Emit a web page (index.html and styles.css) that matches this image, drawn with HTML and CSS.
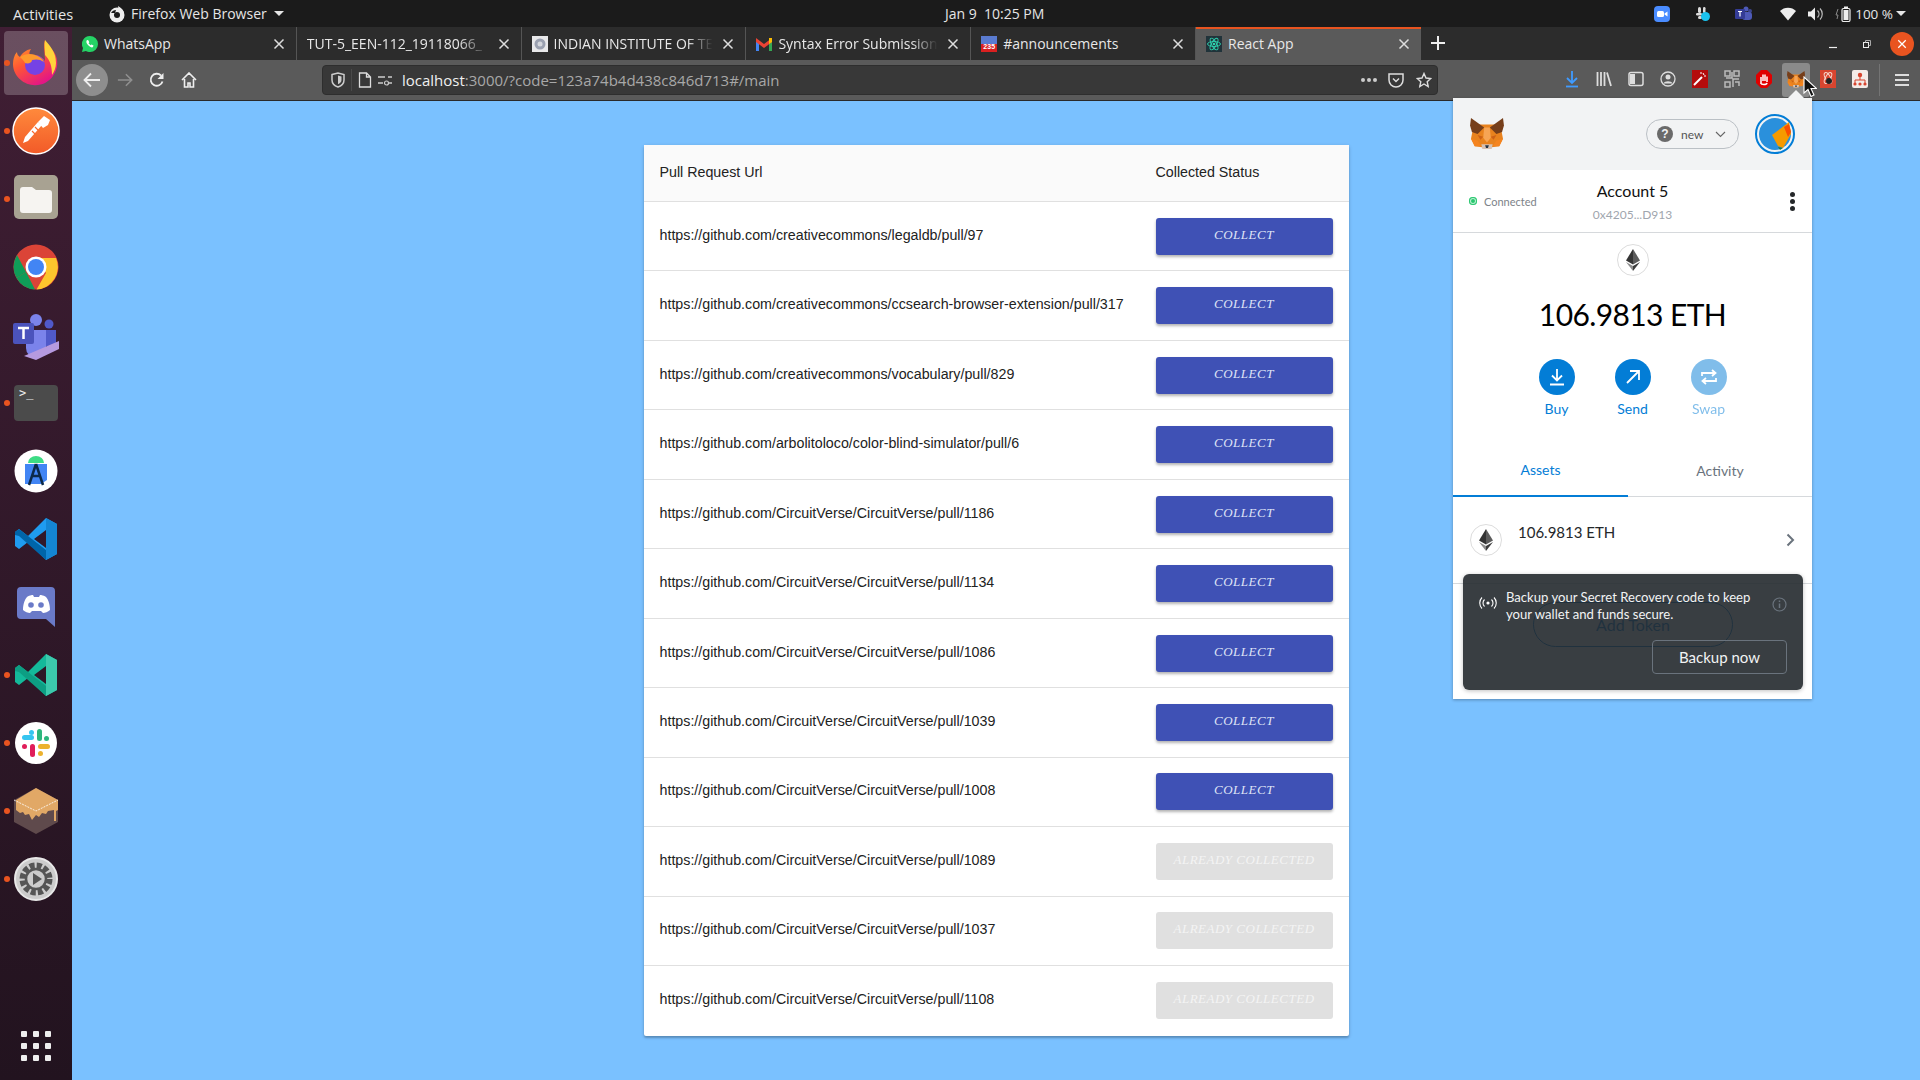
FILE: index.html
```html
<!DOCTYPE html>
<html lang="en">
<head>
    <meta charset="UTF-8">
    <title>React App</title>
    <link rel="stylesheet" href="styles.css">
</head>
<body>
    <svg class="defs" width="0" height="0">
        <symbol id="fox" viewBox="0 0 36 34">
            <polygon fill="#e8821e" points="3,12 8,7 28,7 33,12 35,22 31,30 23,31 20,33 16,33 13,31 5,30 1,22"/>
            <polygon fill="#763e1a" points="1,0 15,10 8,17 2,15 0,8"/>
            <polygon fill="#763e1a" points="35,0 21,10 28,17 34,15 36,8"/>
            <polygon fill="#f6a455" points="15,10 21,10 22,21 18,26 14,21"/>
            <polygon fill="#d7c1b3" points="12,28 24,28 23,33 13,33"/>
            <polygon fill="#233447" points="16,29 20,29 19,32 17,32"/>
            <polygon fill="#cd6116" points="8,18 14,20 11,23"/>
            <polygon fill="#cd6116" points="28,18 22,20 25,23"/>
            <polygon fill="#f5841f" points="1,22 8,24 12,30 5,30"/>
            <polygon fill="#f5841f" points="35,22 28,24 24,30 31,30"/>
        </symbol>
        <symbol id="eth" viewBox="0 0 32 32">
            <circle cx="16" cy="16" r="15.5" fill="#fff" stroke="#dcdcdc"/>
            <polygon fill="#343434" points="16,5 9,16.4 16,20.4"/>
            <polygon fill="#5c5c5c" points="16,5 23,16.4 16,20.4"/>
            <polygon fill="#8c8c8c" points="16,22 9,18 16,27"/>
            <polygon fill="#3c3c3c" points="16,22 23,18 16,27"/>
        </symbol>
        <symbol id="close" viewBox="0 0 12 12">
            <path d="M1.5 1.5l9 9M10.5 1.5l-9 9" stroke="currentColor" stroke-width="1.5" fill="none"/>
        </symbol>
    </svg>

    <div class="topbar">
        <span class="activities">Activities</span>
        <span class="app-menu">
            <svg width="18" height="18" viewBox="0 0 18 18"><circle cx="9" cy="10" r="7.5" fill="#eee"/><circle cx="9" cy="10" r="3" fill="#1b1b1b"/><path d="M10 1c3 2 6 4 6 8l-5-2z" fill="#eee"/><path d="M3 8c1-2 3-3 5-3l-1 3z" fill="#1b1b1b"/></svg>
            Firefox Web Browser
            <i class="caret"></i>
        </span>
        <span class="clock">Jan 9&nbsp;&nbsp;10:25 PM</span>
        <div class="tray">
            <svg class="tray-zoom" width="16" height="16" viewBox="0 0 16 16"><rect width="16" height="16" rx="4" fill="#4a8cff"/><rect x="3" y="5" width="7" height="6" rx="1.5" fill="#fff"/><path d="M10.5 7.5l3-2v5l-3-2z" fill="#fff"/></svg>
            <svg class="tray-slack" width="16" height="16" viewBox="0 0 16 16"><g fill="#ddd"><rect x="3" y="1" width="3" height="6" rx="1.5"/><rect x="1" y="7" width="6" height="2.5" rx="1.2"/><rect x="8" y="1" width="2.5" height="6" rx="1.2"/><rect x="3" y="10" width="4" height="3" rx="1.5"/></g><circle cx="10.5" cy="10.5" r="4.5" fill="#19c2ee"/></svg>
            <svg class="tray-teams" width="18" height="16" viewBox="0 0 18 16"><circle cx="11" cy="3" r="2.5" fill="#4e5ab8"/><circle cx="15" cy="5" r="2" fill="#3d4690"/><rect x="7" y="6" width="10" height="8" rx="3" fill="#4e5ab8"/><rect y="3" width="10" height="10" rx="1" fill="#343c96"/><path d="M3 5.500h4M5 5.500v5" stroke="#fff" stroke-width="1.200"/></svg>
            <svg class="tray-wifi" width="16" height="14" viewBox="0 0 16 14"><path d="M0 4c4-4.500 12-4.500 16 0l-8 9.500z" fill="#eee"/></svg>
            <svg class="tray-vol" width="16" height="14" viewBox="0 0 16 14"><path d="M0 4.500h3l4-4v13l-4-4H0z" fill="#eee"/><path d="M9.500 3.500c2 2 2 5 0 7M12 1.500c3 3 3 8 0 11" stroke="#bbb" stroke-width="1.200" fill="none"/></svg>
            <svg class="tray-batt" width="18" height="16" viewBox="0 0 18 16"><path d="M3 3l-2 6h2l-1 4" stroke="#888" fill="none"/><rect x="7" y="2.500" width="8" height="13" rx="1.500" fill="none" stroke="#eee" stroke-width="1.200"/><rect x="9" y="0.500" width="4" height="2" fill="#eee"/><rect x="8.500" y="4" width="5" height="10" fill="#eee"/></svg>
            <span class="battery">100 %</span>
            <i class="caret"></i>
        </div>
    </div>

    <div class="desktop">
        <nav class="dock">
            <div class="dock-item active running">
                <svg width="48" height="48" viewBox="0 0 48 48"><defs><linearGradient id="ffx" x1="0" y1="0" x2="0.600" y2="1"><stop offset="0" stop-color="#ffb32c"/><stop offset="0.500" stop-color="#ff5634"/><stop offset="1" stop-color="#e31587"/></linearGradient></defs><path d="M33 1c1 5 5 6 9 12 5 8 4 17-1 24-5 7-13 10-20 9C10 45 1 36 1 25c0-4 1-9 4-12 0 2 1 4 3 5 2-4 6-7 11-8-2 3-2 5-1 6 5-1 12 1 15 6 0-7-2-15 0-21z" fill="url(#ffx)"/><path d="M33 1c5 6 11 12 11 23 0 5-2 9-4 12 0-9-2-15-7-20 0-6-1-10 0-15z" fill="#ffd43b"/><circle cx="23" cy="26" r="10" fill="#7542e5"/><path d="M8 18c4-3 10-4 15-2 4 1 7 3 9 7-4-3-8-3-12-2 0 3-4 4-7 3-1-2-3-4-5-6z" fill="#ff9a2e"/></svg>
            </div>
            <div class="dock-item running">
                <svg width="48" height="48" viewBox="0 0 48 48"><defs><linearGradient id="pm" x1="0" y1="0" x2="0" y2="1"><stop offset="0" stop-color="#ff8a3c"/><stop offset="1" stop-color="#f25a28"/></linearGradient></defs><circle cx="24" cy="24" r="23" fill="url(#pm)" stroke="#fff" stroke-width="1.500"/><path d="M11 36l5-2 14-16-4-3-13 15z" fill="#fff"/><path d="M26 15l6-6 6 4-2 5-5 3z" fill="#fff"/><path d="M20 24l5 5M23 20l5 5" stroke="#f66a30" stroke-width="1.200"/></svg>
            </div>
            <div class="dock-item running nudge-up">
                <svg width="44" height="44" viewBox="0 0 44 44"><rect width="44" height="44" rx="5" fill="#a8a292"/><path d="M6 15a3 3 0 0 1 3-3h9l4 3h13a3 3 0 0 1 3 3v17a3 3 0 0 1-3 3H9a3 3 0 0 1-3-3z" fill="#f6f4f1"/></svg>
            </div>
            <div class="dock-item">
                <svg width="46" height="46" viewBox="0 0 46 46"><circle cx="23" cy="23" r="22.500" fill="#db4437"/><path d="M23 14h20a22.500 22.500 0 0 1-19.500 31.500L33 29z" fill="#fdc52d"/><path d="M4 11l9 17-9.500 6A22.500 22.500 0 0 1 4 11z" fill="#0f9d58"/><path d="M13 28l9 17.500A22.500 22.500 0 0 1 3.500 34z" fill="#0f9d58"/><circle cx="23" cy="23" r="10.500" fill="#fff"/><circle cx="23" cy="23" r="8" fill="#4285f4"/></svg>
            </div>
            <div class="dock-item nudge-down">
                <svg width="48" height="46" viewBox="0 0 48 46"><circle cx="24" cy="6" r="6" fill="#7b83eb"/><circle cx="37" cy="10" r="4.500" fill="#5059c9"/><path d="M30 16h14v14a10 10 0 0 1-14 0z" fill="#5059c9"/><path d="M14 16h20v18a10 10 0 0 1-20 0z" fill="#7b83eb"/><rect x="1" y="9" width="21" height="21" rx="2" fill="#4b53bc"/><path d="M6 14h11M11.500 14v11" stroke="#fff" stroke-width="2.500"/><polygon points="12,42 47,27 47,35 24,46" fill="#b69ae0"/></svg>
            </div>
            <div class="dock-item running">
                <div class="term">&gt;_</div>
            </div>
            <div class="dock-item">
                <svg width="44" height="44" viewBox="0 0 44 44"><circle cx="22" cy="22" r="21.500" fill="#fff"/><path d="M14 14a8 7 0 0 1 16 0z" fill="#3ddc84"/><path d="M11 15h22v16l-6 4H11z" fill="#4285f4"/><path d="M22 15l-7 21M22 15l7 21M17 27h10" stroke="#0c2a4a" stroke-width="2.500" fill="none"/></svg>
            </div>
            <div class="dock-item">
                <svg width="44" height="44" viewBox="0 0 44 44"><path d="M32 1l11 6v30l-11 6-18-18-9 7-4-3V15l4-3 9 7zM32 13L20 22l12 9z" fill="#1f9cf0"/><path d="M32 1l11 6v30l-11 6z" fill="#1486d3"/><path d="M1 15l4-3 27 21v10L5 19l-4-1z" fill="#0065a9"/></svg>
            </div>
            <div class="dock-item">
                <svg width="38" height="40" viewBox="0 0 38 40"><path d="M4 0h30a4 4 0 0 1 4 4v36l-9-8H4a4 4 0 0 1-4-4V4a4 4 0 0 1 4-4z" fill="#6a7ac8"/><path d="M6 23c0-6 2-11 4-13 3-2 6-2 6-2l1 2h5l1-2s3 0 6 2c2 2 4 7 4 13-2 2-5 3-7 3l-2-2h-9l-2 2c-2 0-5-1-7-3z" fill="#fff"/><circle cx="14" cy="18" r="2.800" fill="#6a7ac8"/><circle cx="24" cy="18" r="2.800" fill="#6a7ac8"/></svg>
            </div>
            <div class="dock-item running">
                <svg width="44" height="44" viewBox="0 0 44 44"><path d="M32 1l11 6v30l-11 6-18-18-9 7-4-3V15l4-3 9 7zM32 13L20 22l12 9z" fill="#14b99a"/><path d="M32 1l11 6v30l-11 6z" fill="#3cc9ac"/><path d="M1 15l4-3 27 21v10L5 19l-4-1z" fill="#0d9e83"/></svg>
            </div>
            <div class="dock-item running">
                <svg width="42" height="42" viewBox="0 0 42 42"><circle cx="21" cy="21" r="21" fill="#fff"/><rect x="7" y="13" width="12" height="5" rx="2.500" fill="#36c5f0"/><rect x="14" y="8" width="5" height="5" rx="2.500" fill="#36c5f0"/><rect x="22" y="7" width="5" height="12" rx="2.500" fill="#2eb67d"/><rect x="29" y="14" width="5" height="5" rx="2.500" fill="#2eb67d"/><rect x="23" y="22" width="12" height="5" rx="2.500" fill="#ecb22e"/><rect x="23" y="29" width="5" height="5" rx="2.500" fill="#ecb22e"/><rect x="15" y="22" width="5" height="13" rx="2.500" fill="#e01e5a"/><rect x="7" y="22" width="5" height="5" rx="2.500" fill="#e01e5a"/></svg>
            </div>
            <div class="dock-item running">
                <svg width="44" height="46" viewBox="0 0 44 46"><polygon points="22,0 44,12 44,34 22,46 0,34 0,12" fill="#5f4a4c"/><path d="M22 0l22 12v10l-2 1v10h-2V22l-6 1-2 3-4-1-3 4-3-2-4 5-3-6-4 1-2-3-3 1-4-3v-10z" fill="#e1a866"/><path d="M0 12l22 11 22-11" stroke="#fff" stroke-width="0.800" stroke-dasharray="2 1" fill="none"/></svg>
            </div>
            <div class="dock-item running">
                <svg width="44" height="44" viewBox="0 0 44 44"><circle cx="22" cy="22" r="21" fill="#ccc" stroke="#e8e8e8" stroke-width="2"/><circle cx="22" cy="22" r="13.500" fill="none" stroke="#555" stroke-width="6" stroke-dasharray="5 2.100"/><circle cx="22" cy="22" r="10" fill="#ccc" stroke="#555" stroke-width="2.500"/><path d="M19 16v12l9-6z" fill="#555"/></svg>
            </div>
            <div class="app-grid">
                <i></i><i></i><i></i><i></i><i></i><i></i><i></i><i></i><i></i>
            </div>
        </nav>

        <div class="browser">
            <div class="tabs">
                <div class="tab">
                    <svg class="favicon" width="16" height="16" viewBox="0 0 16 16"><path d="M8 0a8 8 0 0 1 0 16c-1.500 0-3-.4-4-1l-4 1 1-4A8 8 0 0 1 8 0z" fill="#25d366"/><path d="M5 4c-1 1-1 3 1 5s4 3 5 2l.5-1.500-2-1-1 .8-2-2 .8-1-1-2z" fill="#fff"/></svg>
                    <span class="tab-title">WhatsApp</span>
                    <svg class="tab-close" width="12" height="12"><use href="#close"/></svg>
                </div>
                <div class="tab">
                    <span class="tab-title fade">TUT-5_EEN-112_19118066_</span>
                    <svg class="tab-close" width="12" height="12"><use href="#close"/></svg>
                </div>
                <div class="tab">
                    <svg class="favicon" width="16" height="16" viewBox="0 0 16 16"><rect width="16" height="16" fill="#e8e8ea"/><circle cx="8" cy="8" r="5.500" fill="#9aa0b0"/><circle cx="8" cy="8" r="2.500" fill="#d4d6dc"/></svg>
                    <span class="tab-title fade">INDIAN INSTITUTE OF TE</span>
                    <svg class="tab-close" width="12" height="12"><use href="#close"/></svg>
                </div>
                <div class="tab">
                    <svg class="favicon" width="16" height="14" viewBox="0 0 16 14"><path d="M0 2v12h3V5z" fill="#4285f4"/><path d="M16 2v12h-3V5z" fill="#34a853"/><path d="M0 1l8 6 8-6v4l-8 6-8-6z" fill="#ea4335"/><path d="M13 1l3 0v4l-3 2z" fill="#fbbc04"/></svg>
                    <span class="tab-title fade">Syntax Error Submission</span>
                    <svg class="tab-close" width="12" height="12"><use href="#close"/></svg>
                </div>
                <div class="tab">
                    <span class="favicon badge-235">235</span>
                    <span class="tab-title">#announcements</span>
                    <svg class="tab-close" width="12" height="12"><use href="#close"/></svg>
                </div>
                <div class="tab current">
                    <svg class="favicon" width="16" height="16" viewBox="0 0 16 16"><rect width="16" height="16" fill="#20333a"/><g fill="none" stroke="#2ed3b0" stroke-width="0.900"><ellipse cx="8" cy="8" rx="6.500" ry="2.500"/><ellipse cx="8" cy="8" rx="6.500" ry="2.500" transform="rotate(60 8 8)"/><ellipse cx="8" cy="8" rx="6.500" ry="2.500" transform="rotate(120 8 8)"/></g><circle cx="8" cy="8" r="1.300" fill="#2ed3b0"/></svg>
                    <span class="tab-title">React App</span>
                    <svg class="tab-close" width="12" height="12"><use href="#close"/></svg>
                </div>
                <svg class="new-tab" width="14" height="14" viewBox="0 0 14 14"><path d="M7 0v14M0 7h14" stroke="#eee" stroke-width="2"/></svg>
                <div class="window-btns">
                    <svg width="10" height="10" viewBox="0 0 10 10"><path d="M1 8.500h8" stroke="#eee" stroke-width="1.200"/></svg>
                    <svg width="10" height="10" viewBox="0 0 10 10"><rect x="1.500" y="3.500" width="5" height="5" fill="none" stroke="#eee"/><path d="M3.500 3.500V1.500h5V6.500H6.500" fill="none" stroke="#aaa"/></svg>
                    <span class="win-close"><svg width="10" height="10"><use href="#close"/></svg></span>
                </div>
            </div>

            <div class="toolbar">
                <span class="back-btn">
                    <svg width="18" height="16" viewBox="0 0 18 16"><path d="M17 8H2M8 1.500L1.500 8 8 14.500" fill="none" stroke="#eee" stroke-width="1.800"/></svg>
                </span>
                <svg class="nav-icon" width="16" height="16" viewBox="0 0 18 16"><path d="M1 8h15M10 1.500L16.500 8 10 14.500" fill="none" stroke="#8f8f8f" stroke-width="1.800"/></svg>
                <svg class="nav-icon" width="16" height="16" viewBox="0 0 16 16"><path d="M13.500 9.500A6 6 0 1 1 12 3.500" fill="none" stroke="#eee" stroke-width="1.800"/><path d="M14.500 1v6h-6z" fill="#eee"/></svg>
                <svg class="nav-icon" width="16" height="16" viewBox="0 0 16 16"><path d="M1 8l7-7 7 7M3.500 7v8h3.500v-4h2v4h3.500V7" fill="none" stroke="#eee" stroke-width="1.600"/></svg>

                <div class="urlbar">
                    <svg width="14" height="16" viewBox="0 0 14 16"><path d="M1 2.500L7 1l6 1.500V8c0 3.500-3 6-6 7-3-1-6-3.500-6-7z" fill="none" stroke="#ccc" stroke-width="1.500"/><path d="M7 3.500l3.500 1V8c0 2-1.500 3.500-3.500 4.300z" fill="#ccc"/></svg>
                    <i class="url-sep"></i>
                    <svg width="14" height="16" viewBox="0 0 14 16"><path d="M1.500 1h7l4 4v10h-11zM8.500 1v4h4" fill="none" stroke="#ddd" stroke-width="1.300"/></svg>
                    <svg class="perm" width="14" height="12" viewBox="0 0 14 12"><path d="M0 3h7M0 9h5M10 3h4M11 9h3" stroke="#ccc" stroke-width="1.400"/><circle cx="8.500" cy="9" r="2" fill="none" stroke="#ccc" stroke-width="1.200"/></svg>
                    <span class="url"><b>localhost</b>:3000/?code=123a74b4d438c846d713#/main</span>
                    <span class="url-dots"><i></i><i></i><i></i></span>
                    <svg class="pocket" width="16" height="16" viewBox="0 0 16 16"><path d="M1 2h14v6a7 7 0 0 1-14 0z" fill="none" stroke="#ddd" stroke-width="1.500"/><path d="M5 6.500l3 3 3-3" fill="none" stroke="#ddd" stroke-width="1.500"/></svg>
                    <svg class="star" width="16" height="16" viewBox="0 0 16 16"><path d="M8 1.500l2 4.500 4.800.5-3.600 3.200 1 4.800L8 12l-4.200 2.500 1-4.800L1.200 6.500 6 6z" fill="none" stroke="#ddd" stroke-width="1.400"/></svg>
                </div>

                <div class="addons">
                    <span class="addon"><svg width="14" height="18" viewBox="0 0 14 18"><path d="M7 1v12M2 8l5 5 5-5" fill="none" stroke="#3f9bff" stroke-width="1.800"/><path d="M1 16.500h12" stroke="#3f9bff" stroke-width="1.800"/></svg></span>
                    <span class="addon"><svg width="16" height="16" viewBox="0 0 16 16"><path d="M1.500 1v14M5 1v14M8.500 1v14M11 1.500l4 13.500" stroke="#ddd" stroke-width="1.800"/></svg></span>
                    <span class="addon"><svg width="16" height="16" viewBox="0 0 16 16"><rect x="1" y="1.500" width="14" height="13" rx="2" fill="none" stroke="#ddd" stroke-width="1.500"/><rect x="2" y="3" width="5" height="10" fill="#ddd"/></svg></span>
                    <span class="addon"><svg width="16" height="16" viewBox="0 0 16 16"><circle cx="8" cy="8" r="7" fill="none" stroke="#ddd" stroke-width="1.300"/><circle cx="8" cy="6" r="2.500" fill="#ddd"/><path d="M3.500 12.500c1-3 8-3 9 0" fill="#ddd"/></svg></span>
                    <span class="addon"><svg width="16" height="18" viewBox="0 0 16 18"><rect width="16" height="18" fill="#b40c0c"/><path d="M2 15l8-8" stroke="#fff" stroke-width="2"/><path d="M11 3l1 2M14 6l-2 0M9 2v2" stroke="#fff"/></svg></span>
                    <span class="addon"><svg width="16" height="18" viewBox="0 0 16 18"><g fill="none" stroke="#bbb" stroke-width="1.500"><rect x="1" y="1" width="5" height="5"/><rect x="10" y="1" width="5" height="5"/><rect x="1" y="12" width="5" height="5"/></g><path d="M8 2v6H2M15 9H9v8M11 12h4v4" fill="none" stroke="#bbb" stroke-width="1.500"/></svg></span>
                    <span class="addon"><svg width="16" height="18" viewBox="0 0 16 18"><polygon points="5,0 11,0 16,5 16,13 11,18 5,18 0,13 0,5" fill="#e00000"/><path d="M5 13V7M7 11V4.500M9 11V4.500M11 12V6.500M4.500 13c1 2 6 2 6.500 0" stroke="#fff" stroke-width="1.500" fill="none"/></svg></span>
                    <span class="addon hovered"><svg width="18" height="17"><use href="#fox"/></svg></span>
                    <span class="addon"><svg width="16" height="18" viewBox="0 0 16 18"><rect width="16" height="18" fill="#d8452f"/><g fill="none" stroke="#f6d5cc"><ellipse cx="8" cy="8" rx="6" ry="2.500" transform="rotate(60 8 8)"/><ellipse cx="8" cy="8" rx="6" ry="2.500" transform="rotate(120 8 8)"/></g><circle cx="9" cy="11" r="3" fill="#222"/></svg></span>
                    <span class="addon"><svg width="16" height="18" viewBox="0 0 16 18"><rect width="16" height="18" rx="2" fill="#f5ece8"/><circle cx="8" cy="5" r="2.200" fill="#d8452f"/><path d="M8 7v3M3 13v-3h10v3" fill="none" stroke="#d8452f"/><circle cx="3" cy="14" r="1.600" fill="#d8452f"/><circle cx="8" cy="14" r="1.600" fill="#d8452f"/><circle cx="13" cy="14" r="1.600" fill="#d8452f"/></svg></span>
                </div>
                <i class="toolbar-sep"></i>
                <svg class="hamburger" width="14" height="14" viewBox="0 0 14 14"><path d="M0 2h14M0 7h14M0 12h14" stroke="#ddd" stroke-width="2"/></svg>
            </div>

            <main class="page">
                <section class="card">
                    <div class="row head">
                        <span>Pull Request Url</span>
                        <span>Collected Status</span>
                    </div>
                    <div class="row">
                        <span class="url-cell">https://github.com/creativecommons/legaldb/pull/97</span>
                        <button class="collect">COLLECT</button>
                    </div>
                    <div class="row">
                        <span class="url-cell">https://github.com/creativecommons/ccsearch-browser-extension/pull/317</span>
                        <button class="collect">COLLECT</button>
                    </div>
                    <div class="row">
                        <span class="url-cell">https://github.com/creativecommons/vocabulary/pull/829</span>
                        <button class="collect">COLLECT</button>
                    </div>
                    <div class="row">
                        <span class="url-cell">https://github.com/arbolitoloco/color-blind-simulator/pull/6</span>
                        <button class="collect">COLLECT</button>
                    </div>
                    <div class="row">
                        <span class="url-cell">https://github.com/CircuitVerse/CircuitVerse/pull/1186</span>
                        <button class="collect">COLLECT</button>
                    </div>
                    <div class="row">
                        <span class="url-cell">https://github.com/CircuitVerse/CircuitVerse/pull/1134</span>
                        <button class="collect">COLLECT</button>
                    </div>
                    <div class="row">
                        <span class="url-cell">https://github.com/CircuitVerse/CircuitVerse/pull/1086</span>
                        <button class="collect">COLLECT</button>
                    </div>
                    <div class="row">
                        <span class="url-cell">https://github.com/CircuitVerse/CircuitVerse/pull/1039</span>
                        <button class="collect">COLLECT</button>
                    </div>
                    <div class="row">
                        <span class="url-cell">https://github.com/CircuitVerse/CircuitVerse/pull/1008</span>
                        <button class="collect">COLLECT</button>
                    </div>
                    <div class="row">
                        <span class="url-cell">https://github.com/CircuitVerse/CircuitVerse/pull/1089</span>
                        <button class="collect done">ALREADY COLLECTED</button>
                    </div>
                    <div class="row">
                        <span class="url-cell">https://github.com/CircuitVerse/CircuitVerse/pull/1037</span>
                        <button class="collect done">ALREADY COLLECTED</button>
                    </div>
                    <div class="row">
                        <span class="url-cell">https://github.com/CircuitVerse/CircuitVerse/pull/1108</span>
                        <button class="collect done">ALREADY COLLECTED</button>
                    </div>
                </section>
            </main>
        </div>
    </div>

    <!-- MetaMask popup hangs over the page -->
    <aside class="wallet">
        <i class="wallet-arrow"></i>
        <header class="wallet-head">
            <svg width="34" height="32"><use href="#fox"/></svg>
            <div class="network">
                <span class="network-q">?</span>
                <span>new</span>
                <svg width="11" height="7" viewBox="0 0 11 7"><path d="M1 1l4.500 4.500L10 1" fill="none" stroke="#666" stroke-width="1.100"/></svg>
            </div>
            <span class="avatar"><svg width="32" height="32" viewBox="0 0 32 32"><circle cx="16" cy="16" r="16" fill="#2a90dc"/><path d="M13 17L30 4l2 12-8 14-5-2z" fill="#f59a00"/><path d="M25 9l5-3 2 8-3 5z" fill="#fa4e00"/><path d="M19 29l5 1-3 2z" fill="#1a7a4a"/></svg></span>
        </header>
        <div class="account">
            <div class="connected"><i></i>Connected</div>
            <div class="account-name">
                <strong>Account 5</strong>
                <span>0x4205...D913</span>
            </div>
            <span class="kebab"><i></i><i></i><i></i></span>
        </div>
        <div class="balance">
            <svg width="32" height="32"><use href="#eth"/></svg>
            <div class="amount">106.9813 ETH</div>
            <div class="actions">
                <div class="action">
                    <span class="action-btn"><svg width="18" height="18" viewBox="0 0 18 18"><path d="M9 1v11M4 7.500L9 12.500l5-5M2 16.500h14" fill="none" stroke="#fff" stroke-width="1.800"/></svg></span>
                    Buy
                </div>
                <div class="action">
                    <span class="action-btn"><svg width="18" height="18" viewBox="0 0 18 18"><path d="M3 15L15 3M6 3h9v9" fill="none" stroke="#fff" stroke-width="1.800"/></svg></span>
                    Send
                </div>
                <div class="action off">
                    <span class="action-btn"><svg width="18" height="18" viewBox="0 0 18 18"><path d="M2 8V5h13M12 2l3.500 3L12 8M16 10v3H3M6 10l-3.500 3L6 16" fill="none" stroke="#fff" stroke-width="1.800"/></svg></span>
                    Swap
                </div>
            </div>
        </div>
        <div class="wallet-tabs">
            <span class="wallet-tab on">Assets</span>
            <span class="wallet-tab">Activity</span>
        </div>
        <div class="asset">
            <svg width="32" height="32"><use href="#eth"/></svg>
            <span class="asset-value">106.9813 ETH</span>
            <svg class="asset-arrow" width="9" height="14" viewBox="0 0 9 14"><path d="M1.500 1.500L7 7l-5.500 5.500" fill="none" stroke="#6a737d" stroke-width="2"/></svg>
        </div>
        <div class="add-token">Add Token</div>
        <div class="notice">
            <svg class="notice-icon" width="18" height="14" viewBox="0 0 18 14"><circle cx="9" cy="7" r="1.600" fill="#fff"/><path d="M5.500 3.500c-2 2-2 5 0 7M12.500 3.500c2 2 2 5 0 7M3 1.500c-3 3-3 8 0 11M15 1.500c3 3 3 8 0 11" fill="none" stroke="#fff" stroke-width="1.100"/></svg>
            <p>Backup your Secret Recovery code to keep your wallet and funds secure.</p>
            <svg class="notice-info" width="15" height="15" viewBox="0 0 15 15"><circle cx="7.500" cy="7.500" r="6.500" fill="none" stroke="#6a737d" stroke-width="1.200"/><path d="M7.500 6.500v4.500M7.500 3.500v1.500" stroke="#6a737d" stroke-width="1.500"/></svg>
            <button class="backup">Backup now</button>
        </div>
    </aside>

    <!-- mouse cursor over the toolbar -->
    <svg class="cursor" width="14" height="22" viewBox="0 0 14 22"><path d="M1 1v16l4-3.500 3 7 3-1.500-3-6.500h5.500z" fill="#111" stroke="#fff" stroke-width="1.100"/></svg>
</body>
</html>
```

FILE: styles.css
```css
:root {
    --page-blue: #7ac1ff;
    --tab-bar: #2c2c2c;
    --toolbar: #5a5a5a;
    --ubuntu-orange: #e95420;
    --mm-blue: #037dd6;
}

* {
    box-sizing: border-box;
}

html, body {
    margin: 0;
    width: 1920px;
    height: 1080px;
    overflow: hidden;
}

body {
    position: relative;
    display: flex;
    flex-direction: column;
    font-family: "Open Sans", "Noto Sans", sans-serif;
    background: var(--page-blue);
}

.defs {
    position: absolute;
}

/* gnome top bar */
.topbar {
    height: 27px;
    flex: none;
    display: flex;
    align-items: center;
    position: relative;
    padding-left: 13px;
    background: #1b1b1b;
    color: #e6e6e6;
    font-size: 14px;
}

.activities {
    width: 95px;
    font-size: 14.6px;
}

.app-menu {
    display: flex;
    align-items: center;
    gap: 5px;
}

.caret {
    display: inline-block;
    margin-left: 2px;
    border-left: 5px solid transparent;
    border-right: 5px solid transparent;
    border-top: 5px solid #e6e6e6;
}

.clock {
    position: absolute;
    left: 945px;
    font-size: 14px;
}

.tray {
    margin-left: auto;
    display: flex;
    align-items: center;
    padding-right: 14px;
}

.tray-slack { margin-left: 25px; }
.tray-teams { margin-left: 24px; }
.tray-wifi { margin-left: 27px; }
.tray-vol { margin-left: 12px; }
.tray-batt { margin-left: 11px; }

.battery {
    margin: 0 1px 0 2px;
    font-size: 13.5px;
}

.desktop {
    flex: 1;
    display: flex;
    min-height: 0;
}

/* launcher on the left */
.dock {
    width: 72px;
    flex: none;
    display: flex;
    flex-direction: column;
    align-items: center;
    padding-top: 4px;
    background: linear-gradient(#401e34, #22131f);
}

.dock-item {
    position: relative;
    width: 64px;
    height: 64px;
    margin-bottom: 4px;
    flex: none;
    display: flex;
    align-items: center;
    justify-content: center;
    border-radius: 4px;
}

.dock-item.active {
    background: rgba(255, 255, 255, 0.22);
}

.dock-item.running::before {
    content: "";
    position: absolute;
    left: 0;
    top: 29px;
    width: 6px;
    height: 6px;
    border-radius: 50%;
    background: var(--ubuntu-orange);
}

.nudge-up {
    padding-bottom: 4px;
}

.nudge-down {
    padding-top: 4px;
}

.term {
    width: 44px;
    height: 36px;
    padding-left: 5px;
    border-radius: 4px;
    background: #4b4b4b;
    color: #eee;
    font: 12px/16px "DejaVu Sans Mono", monospace;
}

.app-grid {
    margin-top: auto;
    margin-bottom: 19px;
    display: grid;
    grid-template-columns: repeat(3, 6px);
    gap: 6px;
}

.app-grid i {
    height: 6px;
    border-radius: 1px;
    background: #eee;
}

/* firefox */
.browser {
    flex: 1;
    min-width: 0;
    display: flex;
    flex-direction: column;
}

.tabs {
    height: 33px;
    flex: none;
    display: flex;
    align-items: stretch;
    background: var(--tab-bar);
    color: #e8e8e8;
    font-size: 14px;
}

.tab {
    width: 224.8px;
    flex: none;
    display: flex;
    align-items: center;
    padding: 0 11px 0 10px;
    border-right: 1px solid #555;
}

.tab.current {
    background: var(--toolbar);
    border-top: 2px solid var(--ubuntu-orange);
    border-right: 0;
    padding-bottom: 2px;
}

.favicon {
    flex: none;
    margin-right: 6px;
}

.badge-235 {
    width: 16px;
    height: 16px;
    padding-top: 7px;
    background: linear-gradient(#5a7bd0 50%, #d92020 50%);
    color: #fff;
    font: bold 7px/8px "Liberation Sans", sans-serif;
    text-align: center;
    overflow: hidden;
}

.tab-title {
    flex: 1;
    min-width: 0;
    white-space: nowrap;
}

.tab-title.fade {
    -webkit-mask-image: linear-gradient(to right, #000 82%, transparent 98%);
    mask-image: linear-gradient(to right, #000 82%, transparent 98%);
}

.tab-close {
    flex: none;
    margin-left: 6px;
    color: #ddd;
}

.new-tab {
    margin: 9px 0 0 10px;
}

.window-btns {
    margin-left: auto;
    display: flex;
    align-items: center;
    gap: 24px;
    padding-right: 6px;
}

.win-close {
    width: 24px;
    height: 24px;
    margin-left: -6px;
    display: flex;
    align-items: center;
    justify-content: center;
    border-radius: 50%;
    background: var(--ubuntu-orange);
    color: #fff;
}

.toolbar {
    height: 41px;
    flex: none;
    display: flex;
    align-items: center;
    padding: 0 11px 1px 4px;
    background: var(--toolbar);
    border-bottom: 1px solid #2a2a2a;
}

.back-btn {
    width: 32px;
    height: 32px;
    flex: none;
    display: flex;
    align-items: center;
    justify-content: center;
    border-radius: 50%;
    background: #8e8e8e;
}

.nav-icon {
    flex: none;
    margin-left: 16px;
}

.back-btn + .nav-icon {
    margin-left: 9px;
}

.urlbar {
    width: 1116px;
    height: 30px;
    margin-left: 125px;
    flex: none;
    display: flex;
    align-items: center;
    padding: 0 5px 0 8px;
    border-radius: 4px;
    background: #383838;
    color: #a8a8a8;
    font-size: 15px;
    border: 1px solid #2e2e2e;
}

.url-sep {
    width: 1px;
    height: 22px;
    margin: 0 6px;
    background: #4a4a4a;
}

.perm {
    margin: 0 10px 0 6px;
}

.url b {
    font-weight: 400;
    color: #f0f0f0;
}

.url-dots {
    margin-left: auto;
    display: flex;
    gap: 2px;
}

.url-dots i {
    width: 4px;
    height: 4px;
    border-radius: 50%;
    background: #ccc;
}

.pocket {
    margin-left: 11px;
}

.star {
    margin-left: 12px;
}

.addons {
    margin-left: 118px;
    display: flex;
}

.addon {
    width: 32px;
    height: 32px;
    flex: none;
    display: flex;
    align-items: center;
    justify-content: center;
    border-radius: 3px;
}

.addon.hovered {
    width: 28px;
    height: 34px;
    margin: 0 2px;
    background: #8a8a8a;
}

.toolbar-sep {
    width: 1px;
    height: 32px;
    margin-left: 3px;
    background: #747474;
}

.hamburger {
    margin-left: 15px;
}

/* the actual page */
.page {
    flex: 1;
    display: flex;
    justify-content: center;
    align-items: flex-start;
    padding-top: 44px;
    background: var(--page-blue);
}

.card {
    width: 705px;
    background: #fff;
    box-shadow: 0 2px 2px rgba(0, 0, 0, 0.2), 0 1px 4px rgba(0, 0, 0, 0.14);
    border-radius: 2px;
    font-family: "Liberation Sans", Arial, sans-serif;
    font-size: 14.25px;
    color: #222;
}

.row {
    height: 69.47px;
    display: grid;
    grid-template-columns: 496px 1fr;
    align-items: center;
    padding: 0 16px;
    border-bottom: 1px solid #e0e0e0;
}

.row:last-child {
    border-bottom: 0;
}

.row.head {
    height: 57px;
    padding-bottom: 2px;
    background: #fafafa;
}

.url-cell {
    margin-top: -3px;
    white-space: nowrap;
}

.collect {
    height: 37px;
    padding: 0 0 3px;
    border: 0;
    border-radius: 3px;
    background: #3f51b5;
    color: #dfe3f6;
    font: italic 13px "Liberation Serif", serif;
    letter-spacing: 0.5px;
    box-shadow: 0 2px 3px rgba(0, 0, 0, 0.3);
}

.collect.done {
    background: #e0e0e0;
    color: #f4f4f4;
    box-shadow: none;
}

/* metamask popup */
.wallet {
    position: absolute;
    left: 1453px;
    top: 98px;
    width: 359px;
    height: 601px;
    display: flex;
    flex-direction: column;
    background: #fff;
    box-shadow: 0 1px 3px rgba(0, 0, 0, 0.3);
    font-family: "Lato", "Open Sans", sans-serif;
    color: #24272a;
}

.wallet-arrow {
    position: absolute;
    left: 335px;
    top: -8px;
    border-left: 8px solid transparent;
    border-right: 8px solid transparent;
    border-bottom: 8px solid #f2f3f4;
}

.wallet-head {
    height: 72px;
    flex: none;
    display: flex;
    align-items: center;
    padding: 0 17px 0 17px;
    background: #f2f3f4;
}

.network {
    width: 93px;
    height: 30px;
    margin-left: auto;
    display: flex;
    align-items: center;
    gap: 8px;
    padding-left: 10px;
    border: 1px solid #bbc0c5;
    border-radius: 15px;
    font-size: 12px;
    color: #555;
}

.network-q {
    width: 16px;
    height: 16px;
    border-radius: 50%;
    background: #6a6a6a;
    color: #f2f3f4;
    font: bold 12px/16px "Liberation Sans", sans-serif;
    text-align: center;
}

.network svg {
    margin-left: 4px;
}

.avatar {
    width: 40px;
    height: 40px;
    margin-left: 16px;
    display: flex;
    align-items: center;
    justify-content: center;
    border: 2px solid var(--mm-blue);
    border-radius: 50%;
}

.account {
    height: 63px;
    flex: none;
    display: grid;
    grid-template-columns: 1fr auto 1fr;
    align-items: center;
    padding: 0 16px;
    border-bottom: 1px solid #d6d9dc;
}

.connected {
    display: flex;
    align-items: center;
    gap: 7px;
    font-size: 11px;
    color: #7d8389;
}

.connected i {
    width: 8px;
    height: 8px;
    border-radius: 50%;
    background: #28c76f;
    box-shadow: inset 0 0 0 1px #28c76f, inset 0 0 0 2px #bff0d4;
}

.account-name {
    display: flex;
    flex-direction: column;
    align-items: center;
    gap: 7px;
}

.account-name strong {
    font-weight: 400;
    font-size: 16px;
    color: #111;
}

.account-name span {
    font-size: 12px;
    color: #9fa6ae;
}

.kebab {
    justify-self: end;
    display: flex;
    flex-direction: column;
    gap: 2px;
    padding-right: 1px;
}

.kebab i {
    width: 5px;
    height: 5px;
    border-radius: 50%;
    background: #24272a;
}

.balance {
    height: 215px;
    flex: none;
    display: flex;
    flex-direction: column;
    align-items: center;
    padding-top: 11px;
}

.amount {
    margin-top: 14px;
    font-size: 30px;
    line-height: 48px;
    letter-spacing: -0.6px;
    color: #000;
}

.actions {
    margin-top: 21px;
    display: flex;
    gap: 40px;
}

.action {
    width: 36px;
    display: flex;
    flex-direction: column;
    align-items: center;
    gap: 5px;
    font-size: 14px;
    color: var(--mm-blue);
}

.action-btn {
    width: 36px;
    height: 36px;
    display: flex;
    align-items: center;
    justify-content: center;
    border-radius: 50%;
    background: var(--mm-blue);
}

.action.off {
    opacity: 0.5;
}

.wallet-tabs {
    height: 49px;
    flex: none;
    display: grid;
    grid-template-columns: 175px 1fr;
    border-bottom: 1px solid #d6d9dc;
    font-size: 14px;
    color: #6a737d;
}

.wallet-tab {
    display: flex;
    align-items: center;
    justify-content: center;
    padding-bottom: 4px;
}

.wallet-tab.on {
    color: var(--mm-blue);
    border-bottom: 2px solid var(--mm-blue);
    margin-bottom: -1px;
}

.asset {
    height: 87px;
    flex: none;
    display: flex;
    align-items: center;
    padding: 0 17px;
    border-bottom: 1px solid #d6d9dc;
}

.asset-value {
    margin: 0 0 16px 16px;
    font-size: 15px;
}

.asset-arrow {
    margin: 0 0 0 auto;
}

.add-token {
    position: absolute;
    left: 80px;
    top: 504px;
    width: 200px;
    height: 45px;
    display: flex;
    align-items: center;
    justify-content: center;
    border: 1px solid var(--mm-blue);
    border-radius: 23px;
    color: var(--mm-blue);
    font-size: 16px;
}

.notice {
    position: absolute;
    left: 10px;
    top: 476px;
    width: 340px;
    height: 116px;
    padding: 15px 16px 16px 16px;
    display: grid;
    grid-template-columns: 18px 1fr 15px;
    grid-template-rows: 1fr auto;
    column-gap: 9px;
    border-radius: 6px;
    background: rgba(36, 41, 46, 0.9);
    box-shadow: 0 1px 4px rgba(0, 0, 0, 0.25);
    color: #f2f3f4;
    font-size: 13.1px;
    line-height: 17px;
}

.notice p {
    margin: 0;
}

.notice-icon {
    margin-top: 7px;
}

.notice-info {
    margin-top: 8px;
}

.backup {
    grid-column: 1 / 4;
    justify-self: end;
    width: 135px;
    height: 34px;
    padding-bottom: 2px;
    border: 1px solid #6a737d;
    border-radius: 4px;
    background: transparent;
    color: #f2f3f4;
    font: 15px "Lato", sans-serif;
}

.cursor {
    position: absolute;
    left: 1803px;
    top: 76px;
}
```
